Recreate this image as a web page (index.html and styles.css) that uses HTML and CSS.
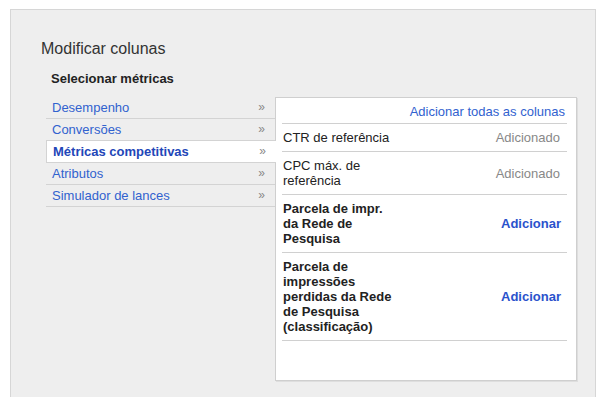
FILE: index.html
```html
<!DOCTYPE html>
<html lang="pt">
<head>
<meta charset="utf-8">
<title>Modificar colunas</title>
<link rel="stylesheet" href="styles.css">
</head>
<body>
<div class="panel">
  <h1 class="title">Modificar colunas</h1>
  <h2 class="subtitle">Selecionar métricas</h2>
  <div class="picker">
    <ul class="cats">
      <li class="cat"><span>Desempenho</span><span class="chev">»</span></li>
      <li class="cat"><span>Conversões</span><span class="chev">»</span></li>
      <li class="cat selected"><span>Métricas competitivas</span><span class="chev">»</span></li>
      <li class="cat"><span>Atributos</span><span class="chev">»</span></li>
      <li class="cat"><span>Simulador de lances</span><span class="chev">»</span></li>
    </ul>
    <div class="metrics">
      <div class="add-all">Adicionar todas as colunas</div>
      <div class="row"><span class="label">CTR de referência</span><span class="done">Adicionado</span></div>
      <div class="row"><span class="label">CPC máx. de referência</span><span class="done">Adicionado</span></div>
      <div class="row strong"><span class="label">Parcela de impr. da Rede de Pesquisa</span><span class="add">Adicionar</span></div>
      <div class="row strong"><span class="label">Parcela de impressões perdidas da Rede de Pesquisa (classificação)</span><span class="add">Adicionar</span></div>
    </div>
  </div>
</div>
</body>
</html>
```
FILE: styles.css
```css
html, body {
  margin: 0;
  padding: 0;
  background: #ffffff;
}
body {
  font-family: Arial, "Liberation Sans", sans-serif;
  font-size: 13px;
  color: #222;
  overflow: hidden;
}
.panel {
  margin: 9px 1px 0 10px;
  min-height: 420px;
  background: #eeeeee;
  border: 1px solid #d6d6d6;
  border-bottom: none;
  padding: 30px 0 0 30px;
  box-sizing: border-box;
}
.title {
  margin: 0;
  font-size: 16px;
  font-weight: normal;
  line-height: 18px;
  color: #333;
}
.subtitle {
  margin: 13px 0 0 10px;
  font-size: 13px;
  font-weight: bold;
  line-height: 15px;
  color: #222;
}
.picker {
  display: flex;
  align-items: flex-start;
  margin: 11px 0 0 5px;
}
.cats {
  list-style: none;
  margin: 0;
  padding: 0;
  width: 229px;
  position: relative;
  z-index: 1;
}
.cat {
  display: flex;
  justify-content: space-between;
  align-items: center;
  height: 21px;
  border-bottom: 1px solid #d3d3d3;
  padding: 0 10px 0 6px;
  color: #3162cf;
  line-height: 15px;
}
.cat.selected {
  background: #ffffff;
  border-left: 1px solid #d3d3d3;
  padding-left: 6px;
  margin-right: -1px;
  font-weight: bold;
  color: #2246b8;
}
.chev {
  color: #888;
  font-weight: normal;
  font-size: 12px;
}
.metrics {
  box-sizing: border-box;
  width: 302px;
  background: #fff;
  border: 1px solid #cfcfcf;
  box-shadow: 1px 1px 0 #dedede;
  padding: 0 9px 39px 6px;
}
.add-all {
  text-align: right;
  color: #3162cf;
  line-height: 15px;
  padding: 6px 2px 4px 0;
  border-bottom: 1px solid #d0d0d0;
}
.row {
  display: flex;
  align-items: center;
  justify-content: space-between;
  padding: 6px 7px 6px 1px;
  line-height: 15px;
  border-bottom: 1px solid #d0d0d0;
}
.label {
  width: 112px;
}
.strong .label {
  font-weight: bold;
}
.done {
  color: #888;
}
.add {
  color: #2a52cc;
  font-weight: bold;
  margin-right: -1px;
}
```
